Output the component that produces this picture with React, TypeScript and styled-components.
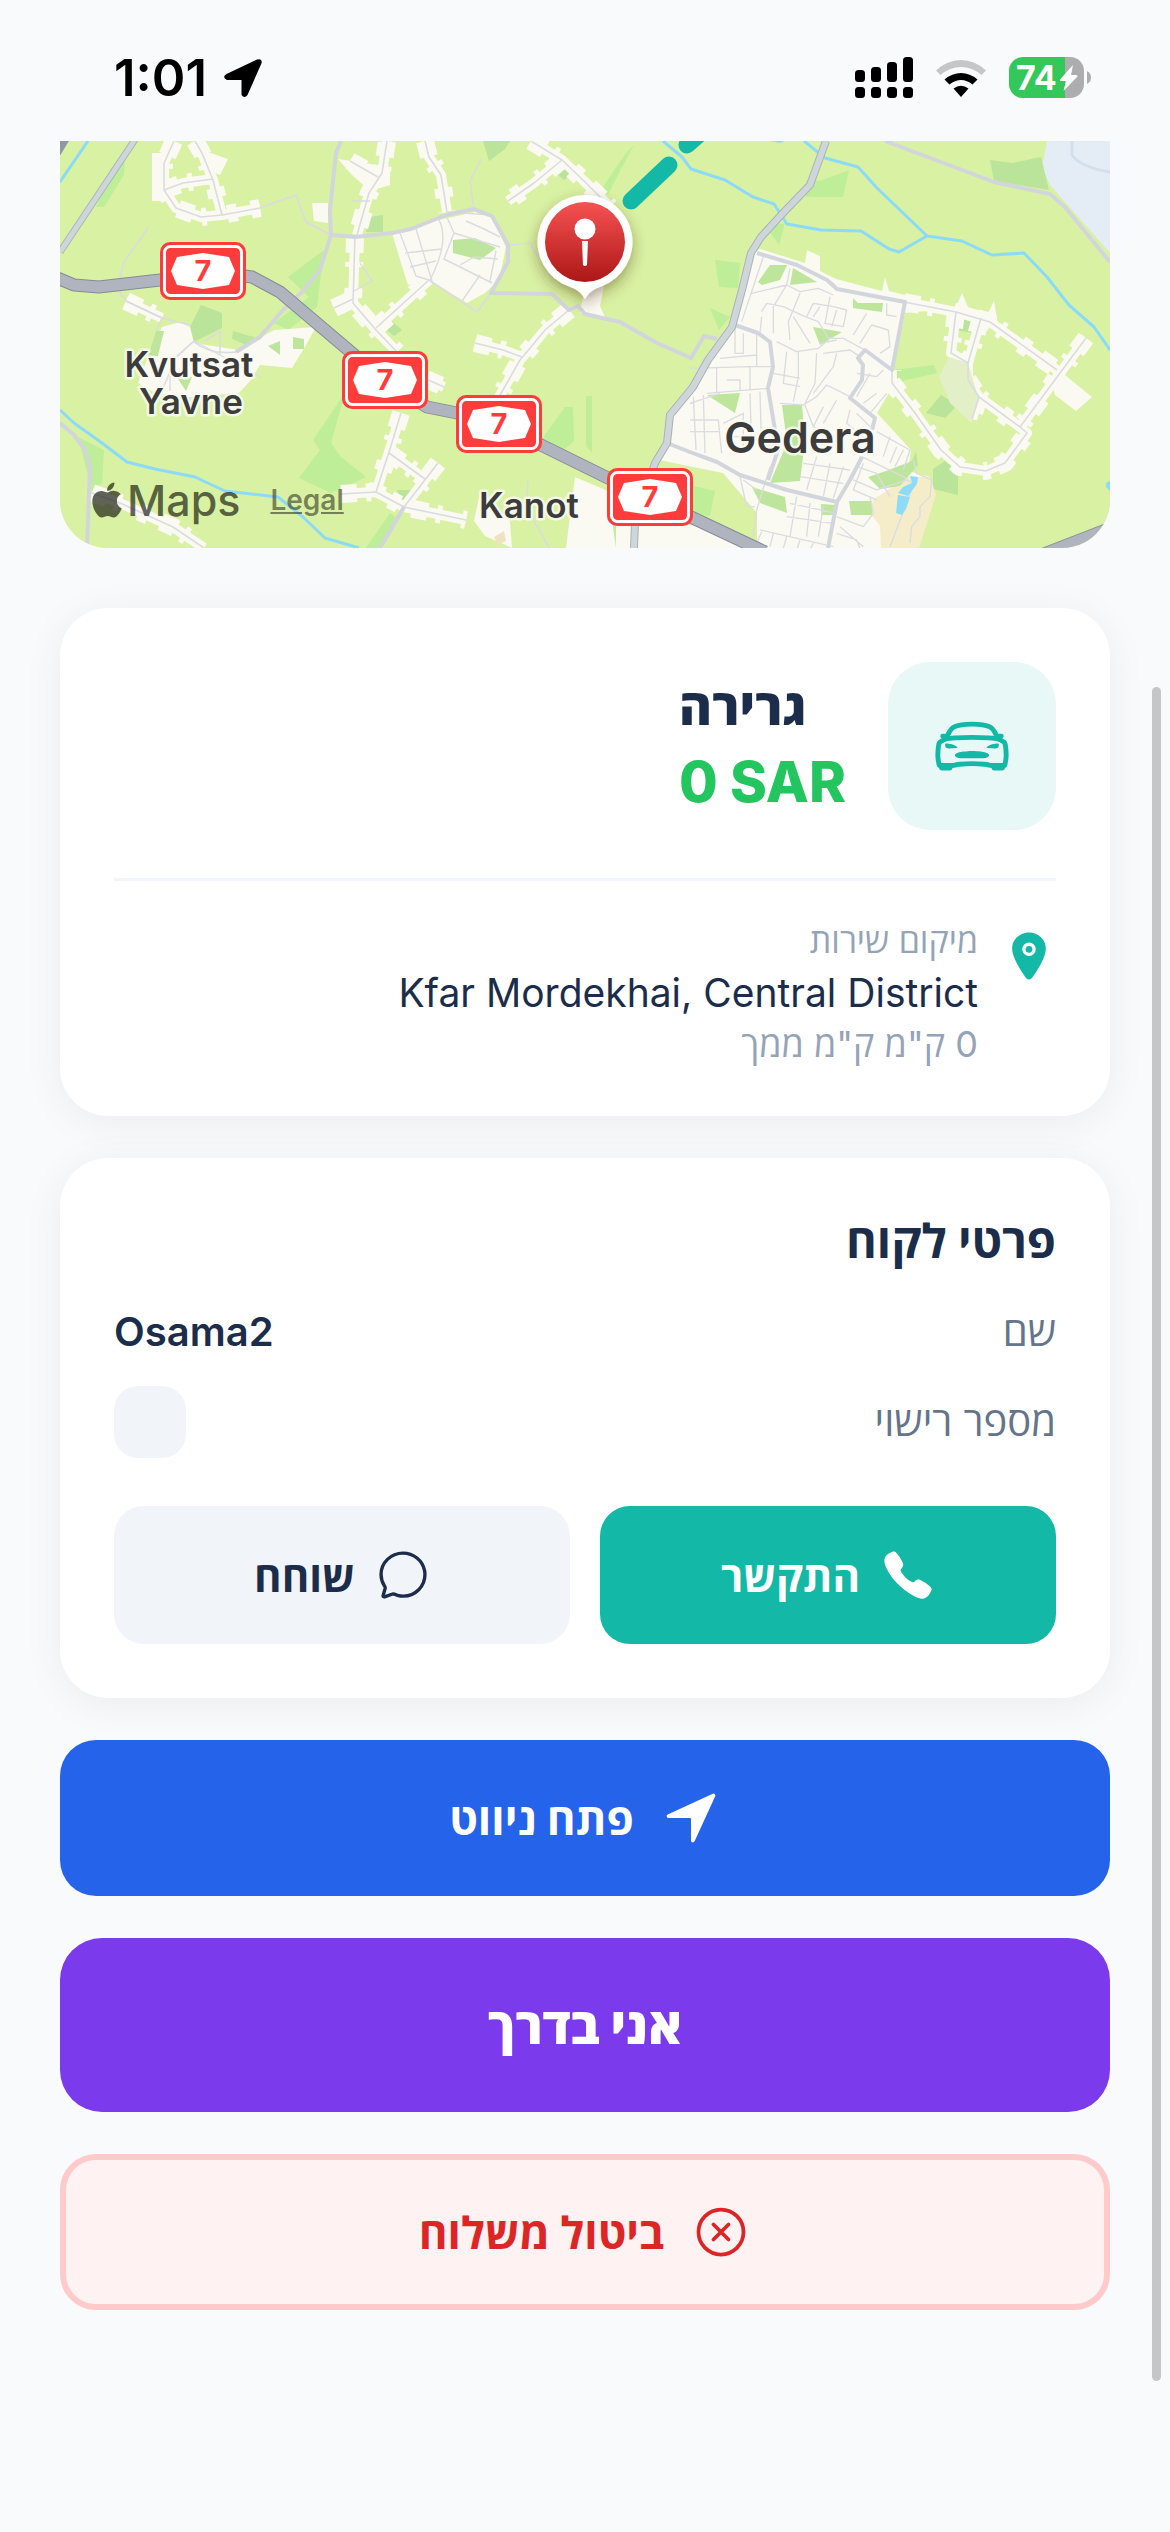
import styled, { createGlobalStyle } from "styled-components";
import {
  IoCall,
  IoCarSportOutline,
  IoChatbubbleOutline,
  IoCloseCircleOutline,
  IoLocation,
  IoNavigate,
} from "react-icons/io5";
import { FaApple } from "react-icons/fa";

const GlobalStyle = createGlobalStyle`
  * {
    box-sizing: border-box;
  }

  body {
    margin: 0;
    background-color: #f8fafc;
    color: #1b2d4a;
    font-family: Inter, "Open Sans", "DejaVu Sans", sans-serif;
  }

  button {
    font-family: inherit;
    cursor: pointer;
  }
`;

const Page = styled.div`
  min-height: 100vh;
  background-color: #f8fafc;
`;

const StatusBar = styled.header`
  display: flex;
  align-items: center;
  justify-content: space-between;
  height: 141px;
  padding: 15px 78px 0 114px;
`;

const StatusGroup = styled.div<{ $gap: number }>`
  display: flex;
  align-items: center;
  gap: ${(props) => props.$gap}px;
`;

const Clock = styled.time`
  font-size: 51px;
  font-weight: 600;
  line-height: 60px;
  color: #000;
`;

const Content = styled.main`
  display: flex;
  flex-direction: column;
  gap: 42px;
  padding: 0 60px 60px;
`;

const MapFrame = styled.section`
  position: relative;
  height: 407px;
  margin-bottom: 18px;
  border-radius: 0 0 48px 48px;
  overflow: hidden;
  background-color: #d9f1a2;

  > svg {
    display: block;
    width: 100%;
    height: 100%;
  }
`;

const Attribution = styled.div`
  position: absolute;
  left: 27px;
  bottom: 21px;
  display: flex;
  align-items: center;
  color: rgba(30, 34, 20, 0.7);
`;

const MapsName = styled.span`
  font-size: 43px;
  font-weight: 500;
  line-height: 54px;
`;

const LegalLink = styled.a`
  margin-left: 30px;
  font-size: 28px;
  font-weight: 600;
  line-height: 54px;
  color: rgba(30, 34, 20, 0.55);
`;

const Card = styled.section`
  direction: rtl;
  padding: 54px;
  border-radius: 48px;
  background-color: #fff;
  box-shadow: 0 6px 42px rgba(0, 0, 0, 0.06);
`;

const ServiceHeader = styled.div`
  display: flex;
  align-items: center;
  gap: 42px;
  padding-bottom: 48px;
  border-bottom: 3px solid #f1f5f9;
`;

const ServiceIcon = styled.div`
  display: flex;
  align-items: center;
  justify-content: center;
  width: 168px;
  height: 168px;
  border-radius: 42px;
  background-color: #e7f8f6;
  color: #14b8a6;
`;

const ServiceText = styled.div`
  display: flex;
  flex-direction: column;
  align-items: flex-end;
  gap: 6px;
`;

const ServiceName = styled.h1`
  margin: 0;
  font-size: 50px;
  font-weight: 800;
  line-height: 66px;
`;

const Price = styled.div`
  direction: ltr;
  font-size: 56px;
  font-weight: 800;
  line-height: 72px;
  color: #22c55e;
`;

const Location = styled.div`
  display: flex;
  align-items: flex-start;
  gap: 24px;
  padding-top: 42px;
  color: #14b8a6;

  > svg {
    margin-top: 6px;
  }
`;

const LocationText = styled.div`
  display: flex;
  flex-direction: column;
  align-items: flex-start;
  gap: 6px;
`;

const Muted = styled.span<{ $size: number }>`
  font-size: ${(props) => props.$size}px;
  line-height: 36px;
  color: #94a3b8;
`;

const Address = styled.span`
  font-size: 39px;
  line-height: 55px;
  color: #1b2d4a;
`;

const CardTitle = styled.h2`
  margin: 0 0 39px;
  font-size: 47px;
  font-weight: 700;
  line-height: 57px;
`;

const Details = styled.div`
  display: flex;
  flex-direction: column;
  gap: 30px;
`;

const DetailRow = styled.div`
  display: flex;
  align-items: center;
  justify-content: space-between;
`;

const DetailLabel = styled.span`
  font-size: 40px;
  line-height: 48px;
  color: #64748b;
`;

const DetailValue = styled.span`
  font-size: 40px;
  font-weight: 600;
  line-height: 48px;
`;

const Plate = styled.span`
  width: 72px;
  height: 72px;
  border-radius: 24px;
  background-color: #f1f5f9;
`;

const ContactRow = styled.div`
  display: flex;
  gap: 30px;
  margin-top: 48px;
`;

const ContactButton = styled.button<{ $primary?: boolean }>`
  display: flex;
  flex: 1;
  align-items: center;
  justify-content: center;
  gap: 21px;
  height: 138px;
  padding: 0;
  border: none;
  border-radius: 30px;
  background-color: ${(props) => (props.$primary ? "#14b8a6" : "#f1f5f9")};
  color: ${(props) => (props.$primary ? "#fff" : "#1b2d4a")};
  font-size: 42px;
  font-weight: 700;
  direction: rtl;
`;

const ActionButton = styled.button<{ $color: string }>`
  display: flex;
  align-items: center;
  justify-content: center;
  gap: 27px;
  width: 100%;
  height: 156px;
  padding: 0;
  border: none;
  border-radius: 36px;
  background-color: ${(props) => props.$color};
  color: #fff;
  font-size: 44px;
  font-weight: 700;
  direction: rtl;
`;

const StatusButton = styled(ActionButton)`
  height: 174px;
  border-radius: 42px;
  font-size: 50px;
  font-weight: 800;
`;

const CancelButton = styled(ActionButton)`
  border: 6px solid #fecaca;
  color: #dc2626;
`;

const ScrollThumb = styled.div`
  position: fixed;
  top: 687px;
  right: 9px;
  bottom: 151px;
  width: 9px;
  border-radius: 5px;
  background-color: #c5c6c8;
`;

const shields = [
  [100, 101],
  [282, 210],
  [396, 254],
  [547, 327],
];

const woods = [
  "264,109 228,136 249,156 214,182 228,189 257,166",
  "285,252 253,299 260,309 239,337 271,352 306,336 281,316 271,302",
  "18,296 44,309 42,342 32,350",
  "65,16 50,28 46,46 36,66 44,66 64,34",
  "655,119 680,122 678,147 659,146",
  "650,167 670,176 659,189",
  "746,39 760,40 789,29 783,56 746,56",
  "706,86 725,82 719,104",
  "832,229 874,224 877,232 834,242",
  "633,345 655,350 650,375 630,372",
  "505,266 513,266 514,300 500,312 482,298",
  "526,255 532,255 532,312 526,305",
  "551,384 605,390 600,407 551,407",
  "306,407 330,372 338,378 318,407",
  "540,50 566,12 574,4 560,30 548,54",
];

const parks = [
  "141,164 162,172 162,187 134,201 130,186",
  "309,76 323,74 323,91 306,91",
  "492,29 502,19 516,29 504,39",
  "423,0 450,0 445,8 429,20",
  "320,184 332,180 342,189 334,195",
  "337,349 355,349 352,366 344,366",
  "930,19 953,22 981,16 989,49 934,40",
  "873,328 885,320 898,330 898,354 873,348",
  "896,171 928,179 919,193 896,189",
  "866,272 881,254 898,264 885,277",
];

const townParks = [
  "393,99 415,97 436,107 420,119 393,112",
  "173,190 200,198 186,204 172,198",
  "208,205 220,200 220,214",
  "233,196 244,198 244,208 233,208",
  "96,190 104,190 98,215 88,216",
  "118,238 132,236 126,250",
  "698,141 710,124 727,124 720,139 702,144",
  "733,127 757,141 730,144",
  "793,157 798,162 823,162 822,171 793,167",
  "753,186 782,191 760,204",
  "647,254 680,252 675,272",
  "722,264 742,264 745,300 740,340 710,342 727,302",
  "789,360 812,360 812,374 791,374",
  "808,336 826,330 852,320 856,310 858,324 840,345 820,348",
  "692,346 725,356 727,372 700,362",
  "761,363 776,364 774,374 761,374",
];

// village lanes, painted first as built-up land and then as the street itself
const lanes = [
  "M114 0L104 22V49L116 67L141 76L162 74L200 67",
  "M135 0L142 12L153 39L162 74",
  "M104 49L123 42L153 38",
  "M327 0L322 32L309 52L297 94",
  "M290 20L318 36",
  "M295 96L293 162L316 189L337 211",
  "M316 187L369 139",
  "M274 167L293 158",
  "M365 0L369 16L381 34L387 71",
  "M471 0L502 19L523 39L550 66",
  "M502 19L474 42L448 60",
  "M509 169L485 189L471 206L460 219L439 256",
  "M415 202L443 209L462 216",
  "M366 238L384 246",
  "M341 272L329 311L316 351",
  "M329 312L365 338",
  "M378 322L344 366",
  "M281 353L316 351L344 366L406 379",
  "M32 352L60 362L113 386L144 407",
  "M66 160L102 177",
  "M844 161L896 171L930 181L997 229",
  "M1026 197L960 286L967 292L945 322L926 330L900 326L881 309L855 272L832 242V229",
  "M896 171L891 212L908 222V239L919 256L960 286",
  "M921 177L908 222",
  "M919 256L912 278",
];

const paths = [
  "M200 67L236 54L246 81L271 94",
  "M88 87L64 121L60 136V152L66 160L102 177L130 184",
  "M102 177L96 190",
  "M387 71L432 74",
  "M414 68L410 40L421 18",
  "M431 152L417 171L369 139",
  "M271 94L246 81",
  "M102 250L116 216L134 200",
  "M468 340L466 365L489 407",
  "M145 200L160 190V214",
  "M134 201Q150 214 176 211",
  "M450 104L470 102L478 116",
  "M291 0L322 0",
];

const villageStreets =
  "M340 92L356 135L369 139M379 79Q390 100 370 139M356 88L372 140M345 112L382 108M350 126L376 120M386 74L394 92L440 106M394 92L384 118L432 142M400 124L414 116L438 118M420 134L402 160M436 110L430 140M406 80L424 88L440 96M300 122L312 140L294 150M110 222L134 200L160 214L200 236M110 250V226M292 60H310";

const mainStreets = [
  "M281 0L276 12L270 69L271 94L295 96L332 92L351 88L386 74L414 68L432 75L448 104V121L431 152L492 153L509 169L518 165L525 173L560 181L597 202L631 217L644 195L657 198",
  "M271 94L260 129L241 152L223 169L200 196L176 211",
  "M344 366L320 407",
  "M0 282L14 294L25 309L30 326L27 407",
  "M697 112L737 124L767 139L777 148L845 161L832 229L805 209L798 217L803 224L802 239L790 257L815 277L812 289",
  "M675 184L698 192L710 201L713 226L708 247L715 289L718 309L708 339",
  "M607 302L630 311L657 321L680 334L727 349L777 361",
  "M802 316L790 339L777 361L768 407",
  "M825 0L934 41L990 53L1005 66L1050 121",
];

// drawn on a grid three times finer than the rest of the map
const townStreets =
  "M185 130L290 105L330 125L385 115L430 135M220 20L155 215M300 55L290 105L250 170V250M215 185L230 160L280 170L345 200L385 215L415 265H460L525 300M260 275L320 305L385 295L415 270M330 130L295 215L300 270M350 200L370 160L430 170L470 180L460 230M530 190L490 255M510 280L545 225L595 240L600 290L570 310M325 305V380L310 455M290 305L280 400L330 410M380 310L375 400L345 460M250 370L330 385M440 310L430 350L370 430M270 460L340 465L380 440L410 405L480 440M180 350H250M0 355L180 350V420M80 355V430M50 430L235 415M200 250V350M135 225V310H160V250M90 325L200 315M110 390H150V420M0 510H85L95 610M40 435L45 610M0 545H90M10 440L18 600M180 430L185 600M210 425L215 600M100 520L160 490V600M120 560H180M340 640L480 660M330 680L460 700M380 620L350 720M420 640L400 740M460 650L430 745M300 760L440 790M290 800L430 820M320 740L300 860M360 760L350 860M400 770L385 860M210 840L430 890M215 845L200 880M250 850L240 890M290 860L280 895M330 870L322 895M370 880L362 895M515 620L640 680L665 700M490 690L560 720L650 690M500 650L560 670L600 740M520 640L490 720L560 750M560 545L660 600L640 660M600 560L580 620M620 590L600 640M640 600L615 650M440 800L520 830L550 790L540 740M440 850L500 870L510 895M450 830L520 890M500 370L560 380L580 360M540 370L500 440M560 430L520 460M590 430L540 490M400 470L370 530L430 560M440 450L400 520M345 465L370 530M480 480L470 520L520 560M500 490L540 530M390 280L440 270M400 310L480 300L510 320M210 250L215 200M310 200L360 280M370 200L390 170M420 140L405 220L460 230M440 180L425 230M590 160V195L620 200M670 630L680 670L725 690L720 740L690 770V800L665 830L660 880M665 720L600 890M190 860L200 780L240 650M150 680L170 770L195 770M160 690L200 720M0 460L90 430";

const highway =
  "M-5 136L14 144L39 146L100 139L150 130L192 136L220 151L292 212L323 239L367 266L397 272L439 286L481 304L548 337L633 377L705 411";

const countyRoad =
  "M766 0L750 44L723 72L701 96L691 112L682 149L672 186L648 219L633 246L610 274L607 302L595 322L575 382L574 407";

const rivers = [
  "M28 0L0 41",
  "M0 269L14 282L42 302L67 321L95 328L135 336L165 350L218 356L243 376L265 397L299 407",
  "M603 0L622 16L631 28L665 39L693 56L714 63L727 83L761 89L801 90L829 108L839 111L867 95L902 100L932 114L964 112L987 136L1009 164L1034 186L1050 209",
  "M744 0L765 17L798 26L817 47L867 95",
];

const RouteMap = () => (
  <svg viewBox="0 0 1050 407" preserveAspectRatio="xMidYMid slice" role="img" aria-label="Map">
    <defs>
      <linearGradient id="pinRed" x1="0" y1="0" x2="0" y2="1">
        <stop offset="0" stopColor="#f65252" />
        <stop offset="1" stopColor="#ad1717" />
      </linearGradient>
      <filter id="pinShadow" x="-50%" y="-50%" width="200%" height="200%">
        <feDropShadow dx="0" dy="6" stdDeviation="7" floodColor="#402010" floodOpacity="0.4" />
      </filter>
    </defs>

    <rect width="1050" height="407" fill="#d9f1a2" />
    <path d="M987 0L982 26L990 44L1050 112V0Z" fill="#e4ecf5" />
    <path d="M1012 0V14Q1020 26 1050 31" fill="none" stroke="#d3e0ec" strokeWidth="3" />
    {woods.map((points) => (
      <polygon key={points} points={points} fill="#bfee98" />
    ))}
    {parks.map((points) => (
      <polygon key={points} points={points} fill="#b9e49a" />
    ))}

    <g fill="#faf9f2">
      <polygon points="102,186 120,181 130,186 134,202 179,209 214,189 256,186 246,204 232,227 200,224 190,240 179,252 130,256 95,252 78,242 88,216" />
      <polygon points="332,92 379,79 415,71 432,77 446,106 439,139 425,152 407,162 369,139 348,144 341,122" />
      <polygon points="515,336 548,350 556,407 506,407" />
      <polygon points="420,352 450,380 452,407 425,395 414,380" />
      <polygon points="252,62 268,62 268,82 254,80" />
      <polygon points="92,12 104,12 104,60 92,60" />
      <polygon points="145,10 168,18 160,34 150,30" />
      <polygon points="278,18 330,26 330,44 310,50 292,34" />
      <polygon points="525,145 545,140 540,165 545,176 520,172" />
      <polygon points="690,114 700,108 745,122 747,109 760,115 760,130 776,138 822,150 825,136 829,150 845,154 888,168 845,172 832,228 829,252 817,272 851,309 848,330 870,336 840,407 697,407 697,372 663,332 599,319 608,302 610,274 633,246 648,219 672,186 682,149" />
      <polygon points="895,168 902,152 908,166 928,172 934,160 938,185 920,182" />
      <polygon points="990,236 1000,230 1032,256 1016,270 995,254" />
      <polygon points="556,377 640,385 690,407 556,407" />
    </g>
    <g fill="none" stroke="#faf9f2" strokeLinejoin="round">
      {lanes.map((d) => (
        <path key={d} d={d} strokeWidth="10" />
      ))}
      {lanes.map((d) => (
        <path key={d} d={d} strokeWidth="18" strokeDasharray="16 9 5 21 10 14" />
      ))}
    </g>
    <polygon points="889,216 908,222 919,259 911,282 890,262 879,236" fill="#e3efc6" />
    <polygon points="847,336 870,336 876,354 859,407 821,407 820,385 810,372 813,359" fill="#f5edc9" />
    <polygon points="434,396 444,390 446,400 438,404" fill="#efe2c2" />
    {townParks.map((points) => (
      <polygon key={points} points={points} fill="#bde69c" />
    ))}

    <g fill="none" strokeLinejoin="round">
      <g stroke="#dadce0" strokeWidth="1">
        {[...lanes, ...paths].map((d) => (
          <path key={d} d={d} strokeWidth="1.6" />
        ))}
        <path d={villageStreets} strokeWidth="1.4" />
        <path d={townStreets} strokeWidth="4" transform="translate(630 109) scale(0.3333)" />
      </g>
      <g stroke="#8bdbf8" strokeWidth="3">
        {rivers.map((d) => (
          <path key={d} d={d} />
        ))}
      </g>
      <g stroke="#d2d6dc" strokeWidth="4">
        {mainStreets.map((d) => (
          <path key={d} d={d} />
        ))}
      </g>
      <path d="M76 -3L0 111" stroke="#a9b6bf" strokeWidth="7" />
      <path d="M76 -3L0 111" stroke="#cfd6da" strokeWidth="5" />
      <path d="M6 -3L-3 12" stroke="#9097a5" strokeWidth="8" />
      <path d={countyRoad} stroke="#a9b2bc" strokeWidth="8" />
      <path d={countyRoad} stroke="#cfd6da" strokeWidth="6" />
      <path d={highway} stroke="#868b99" strokeWidth="13" />
      <path d={highway} stroke="#b0b4bf" strokeWidth="11" />
    </g>
    <path d="M975 410L1055 379V410Z" fill="#b0b4bf" stroke="#8b909d" />
    <g fill="#8edbf9">
      <polygon points="843,346 852,342 850,335 858,336 857,343 848,355 838,352" />
      <polygon points="838,354 850,356 846,368 842,374 836,372" />
      <polygon points="1046,342 1050,340 1050,350 1046,346" />
      <polygon points="710,0 724,0 720,2" />
    </g>

    <g fill="none" stroke="#14b8a6" strokeWidth="17" strokeLinecap="round">
      <path d="M609 24L571 60" />
      <path d="M645 -12L627 4" />
    </g>

    {shields.map(([x, y]) => (
      <g key={x} transform={`translate(${x} ${y})`}>
        <rect width="86" height="58" rx="10" fill="#ff3c3c" />
        <rect x="4.5" y="4.5" width="77" height="49" rx="6" fill="none" stroke="#fff" strokeWidth="3" />
        <path d="M43 11L69 15L75 29L69 43L43 47L17 43L11 29L17 15Z" fill="#fff" />
        <text x="43" y="39" textAnchor="middle" fontSize="29" fontWeight="700" fill="#ff3c3c">
          7
        </text>
      </g>
    ))}

    <g
      fill="#3c3c3c"
      stroke="#faf9f2"
      strokeWidth="5"
      strokeOpacity="0.85"
      strokeLinejoin="round"
      paintOrder="stroke"
      textAnchor="middle"
      fontWeight="600"
      fontSize="35"
    >
      <text x="129" y="236">Kvutsat</text>
      <text x="131" y="273">Yavne</text>
      <text x="469" y="377">Kanot</text>
      <text x="740" y="312" fontSize="43">
        Gedera
      </text>
    </g>

    <g filter="url(#pinShadow)">
      <path
        d="M525 54A47 47 0 0 0 508 145C516 148 521 151 525 158C529 151 534 148 542 145A47 47 0 0 0 525 54Z"
        fill="#fff"
      />
    </g>
    <circle cx="525" cy="101" r="40" fill="url(#pinRed)" />
    <circle cx="525" cy="88" r="10.5" fill="#fff" />
    <path d="M522 100H528L527 124Q525 126 523 124Z" fill="#fff" />
  </svg>
);

const LocationArrow = () => (
  <svg width="40" height="40" viewBox="0 0 40 40" aria-hidden="true">
    <path
      d="M3.5 16L34 1.600Q39.500 -.2 38.600 5L24.500 37Q21.500 41 18.500 37V22H4Q-1.500 19.500 3.500 16Z"
      fill="#000"
    />
  </svg>
);

const SignalIcon = () => (
  <svg width="58" height="42" viewBox="0 0 58 42" aria-hidden="true">
    <rect x="0" y="13" width="10" height="12" rx="3.500" />
    <rect x="16" y="10" width="10" height="15" rx="3.500" />
    <rect x="32" y="5" width="10" height="20" rx="3.500" />
    <rect x="48" y="0" width="10" height="25" rx="3.500" />
    <rect x="0" y="30" width="10" height="11" rx="3.500" />
    <rect x="16" y="30" width="10" height="11" rx="3.500" />
    <rect x="32" y="30" width="10" height="11" rx="3.500" />
    <rect x="48" y="30" width="10" height="11" rx="3.500" />
  </svg>
);

const WifiIcon = () => (
  <svg width="52" height="40" viewBox="0 0 52 40" aria-hidden="true">
    <path d="M1 12.500Q12 2 26 2T51 12.500L46.500 17Q37 9 26 9T5.500 17Z" fill="#c5c6c8" />
    <path d="M9.500 21.500Q17 15 26 15T42.500 21.500L37.500 26.500Q32 22 26 22T14.500 26.500Z" />
    <path d="M18.500 30.500Q26 25 33.500 30.500L26 39Z" />
  </svg>
);

const BatteryIcon = () => (
  <svg width="83" height="42" viewBox="0 0 83 42" role="img" aria-label="Battery">
    <path d="M14 0H56V41H14A14 14 0 0 1 0 27V14A14 14 0 0 1 14 0Z" fill="#34c759" />
    <path d="M56 0H61A14 14 0 0 1 75 14V27A14 14 0 0 1 61 41H56Z" fill="#adadb0" />
    <path d="M78 14Q82 16 82 20.500T78 27Z" fill="#adadb0" />
    <text x="7" y="33" fontSize="34" fontWeight="700" fill="#fff">
      74
    </text>
    <path
      d="M64 8L51 22.500Q50.500 24 52 24H57L54.500 34L68.500 19.500Q69 18 67 18H62Z"
      fill="#fff"
    />
  </svg>
);

const App: React.FC = () => {
  return (
    <Page>
      <GlobalStyle />
      <StatusBar>
        <StatusGroup $gap={16}>
          <Clock>1:01</Clock>
          <LocationArrow />
        </StatusGroup>
        <StatusGroup $gap={22}>
          <SignalIcon />
          <WifiIcon />
          <BatteryIcon />
        </StatusGroup>
      </StatusBar>

      <Content>
        <MapFrame>
          <RouteMap />
          <Attribution>
            <FaApple size={40} />
            <MapsName>Maps</MapsName>
            <LegalLink href="#legal">Legal</LegalLink>
          </Attribution>
        </MapFrame>

        <Card>
          <ServiceHeader>
            <ServiceIcon>
              <IoCarSportOutline size={78} />
            </ServiceIcon>
            <ServiceText>
              <ServiceName>גרירה</ServiceName>
              <Price>0 SAR</Price>
            </ServiceText>
          </ServiceHeader>
          <Location>
            <IoLocation size={54} />
            <LocationText>
              <Muted $size={34}>מיקום שירות</Muted>
              <Address>Kfar Mordekhai, Central District</Address>
              <Muted $size={36}>0 ק"מ ק"מ ממך</Muted>
            </LocationText>
          </Location>
        </Card>

        <Card>
          <CardTitle>פרטי לקוח</CardTitle>
          <Details>
            <DetailRow>
              <DetailLabel>שם</DetailLabel>
              <DetailValue>Osama2</DetailValue>
            </DetailRow>
            <DetailRow>
              <DetailLabel>מספר רישוי</DetailLabel>
              <Plate />
            </DetailRow>
          </Details>
          <ContactRow>
            <ContactButton $primary>
              <IoCall size={54} />
              התקשר
            </ContactButton>
            <ContactButton>
              <IoChatbubbleOutline size={54} />
              שוחח
            </ContactButton>
          </ContactRow>
        </Card>

        <ActionButton $color="#2563eb">
          <IoNavigate size={60} />
          פתח ניווט
        </ActionButton>
        <StatusButton $color="#7c3aed">אני בדרך</StatusButton>
        <CancelButton $color="#fef2f2">
          <IoCloseCircleOutline size={60} />
          ביטול משלוח
        </CancelButton>
      </Content>
      <ScrollThumb />
    </Page>
  );
};

export default App;
